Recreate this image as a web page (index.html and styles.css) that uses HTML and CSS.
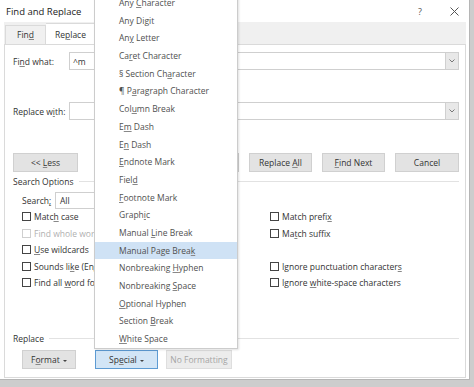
FILE: index.html
```html
<!DOCTYPE html>
<html lang="en">
<head>
  <meta charset="UTF-8" />
  <title>Find and Replace</title>
  <link rel="stylesheet" href="styles.css">
</head>
<body>
  <div class="dialog">
    <div class="titlebar">
      <span class="title">Find and Replace</span>
      <span class="help">?</span>
      <svg class="close" width="9" height="9" viewBox="0 0 9 9"><path d="M0.5 0.5 L8.5 8.5 M8.5 0.5 L0.5 8.5" stroke="#555" stroke-width="1" fill="none"/></svg>
    </div>

    <div class="tabs">
      <div class="tab">Fin<u>d</u></div>
      <div class="tab active">Re<u>p</u>lace</div>
    </div>

    <div class="panel">
      <div class="field-row">
        <label>Fi<u>n</u>d what:</label>
        <div class="combo">
          <span class="combo-text">^m</span>
          <span class="combo-btn"><svg width="6" height="4" viewBox="0 0 6 4"><path d="M0.5 0.5 L3 3 L5.5 0.5" stroke="#777" fill="none"/></svg></span>
        </div>
      </div>

      <div class="field-row replace-row">
        <label>Replace w<u>i</u>th:</label>
        <div class="combo">
          <span class="combo-text"></span>
          <span class="combo-btn"><svg width="6" height="4" viewBox="0 0 6 4"><path d="M0.5 0.5 L3 3 L5.5 0.5" stroke="#777" fill="none"/></svg></span>
        </div>
      </div>

      <div class="btn-row">
        <button class="btn less">&lt;&lt; <u>L</u>ess</button>
        <div class="btn-group">
          <button class="btn"><u>R</u>eplace</button>
          <button class="btn">Replace <u>A</u>ll</button>
          <button class="btn"><u>F</u>ind Next</button>
          <button class="btn cancel">Cancel</button>
        </div>
      </div>

      <div class="group-head"><span>Search Options</span><span class="rule"></span></div>

      <div class="search-row">
        <label>Search<u>;</u></label>
        <div class="select">All</div>
      </div>

      <div class="options">
        <div class="col">
          <div class="check"><span class="box"></span>Matc<u>h</u> case</div>
          <div class="check disabled"><span class="box"></span>Find whole words only</div>
          <div class="check"><span class="box"></span><u>U</u>se wildcards</div>
          <div class="check"><span class="box"></span>Sounds li<u>k</u>e (English)</div>
          <div class="check"><span class="box"></span>Find all <u>w</u>ord forms (English)</div>
        </div>
        <div class="col right">
          <div class="check"><span class="box"></span>Match prefi<u>x</u></div>
          <div class="check"><span class="box"></span>Ma<u>t</u>ch suffix</div>
          <div class="check"></div>
          <div class="check"><span class="box"></span>Ignore punctuation character<u>s</u></div>
          <div class="check"><span class="box"></span>Ignore <u>w</u>hite-space characters</div>
        </div>
      </div>

      <div class="group-head replace-head"><span>Replace</span><span class="rule"></span></div>

      <div class="btn-row bottom">
        <button class="btn format">F<u>o</u>rmat <span class="caret"></span></button>
        <button class="btn special">Sp<u>e</u>cial <span class="caret"></span></button>
        <button class="btn noformat">No Formatting</button>
      </div>
    </div>
  </div>

  <div class="menu">
    <div class="item">Any <u>C</u>haracter</div>
    <div class="item">Any Di<u>g</u>it</div>
    <div class="item">An<u>y</u> Letter</div>
    <div class="item">Ca<u>r</u>et Character</div>
    <div class="item">§ Section Ch<u>a</u>racter</div>
    <div class="item">¶ P<u>a</u>ragraph Character</div>
    <div class="item">Col<u>u</u>mn Break</div>
    <div class="item">E<u>m</u> Dash</div>
    <div class="item">E<u>n</u> Dash</div>
    <div class="item"><u>E</u>ndnote Mark</div>
    <div class="item">Fiel<u>d</u></div>
    <div class="item"><u>F</u>ootnote Mark</div>
    <div class="item">Graph<u>i</u>c</div>
    <div class="item">Manual <u>L</u>ine Break</div>
    <div class="item active">Manual Page Brea<u>k</u></div>
    <div class="item">Nonbreaking <u>H</u>yphen</div>
    <div class="item">Nonbreaking <u>S</u>pace</div>
    <div class="item"><u>O</u>ptional Hyphen</div>
    <div class="item">Section <u>B</u>reak</div>
    <div class="item"><u>W</u>hite Space</div>
  </div>
</body>
</html>
```

FILE: styles.css
```css
* { box-sizing: border-box; }
body { margin: 0; width: 474px; height: 387px; overflow: hidden; position: relative; background: #cdcdcd; font-family: "Open Sans", "Noto Sans", sans-serif; font-size: 8.5px; color: #333; }
u { text-decoration: underline; text-underline-offset: 1px; text-decoration-thickness: 1px; text-decoration-color: #888; }

.dialog { width: 470px; height: 380px; background: #fff; border-right: 1px solid #b5b5b5; border-bottom: 1px solid #b5b5b5; display: flex; flex-direction: column; }

.titlebar { height: 22px; display: flex; align-items: center; padding: 0 10px 0 6px; font-size: 9.5px; color: #222; }
.title { flex: 1; }
.help { margin-right: 28px; font-size: 9px; color: #555; }

.tabs { height: 22px; margin: 0 3px 0 4px; background: #f0f0f0; display: flex; align-items: flex-end; padding-left: 1px; }
.tab { height: 19px; width: 41px; line-height: 18px; text-align: center; border: 1px solid #dadada; border-bottom: none; }
.tab.active { height: 22px; width: 50px; line-height: 21px; background: #fff; border-left: none; margin-bottom: -1px; }

.panel { flex: 1; margin: 0 3px 1px 4px; border: 1px solid #dadada; padding: 7px 6px 0 8px; display: flex; flex-direction: column; }

.field-row { display: flex; align-items: center; height: 18px; }
.field-row label { width: 56px; }
.replace-row { margin-top: 32px; }
.combo { flex: 1; height: 18px; border: 1px solid #cfcfcf; display: flex; align-items: center; }
.combo-text { flex: 1; padding-left: 3px; }
.combo-btn { width: 13px; height: 16px; background: #e8e8e8; border-left: 1px solid #d0d0d0; display: flex; align-items: center; justify-content: center; }

.btn-row { display: flex; margin-top: 33px; height: 19px; }
.btn-group { margin-left: auto; display: flex; gap: 10px; }
.btn { height: 19px; width: 63px; padding: 0; background: #e3e3e3; border: 1px solid #d0d0d0; font: inherit; color: #333; line-height: 17px; text-align: center; white-space: nowrap; }
.btn.less { width: 65px; }
.btn.cancel { width: 64px; }

.group-head { display: flex; align-items: center; height: 12px; margin-top: 3px; }
.group-head .rule { flex: 1; height: 1px; background: #e2e2e2; margin-left: 5px; }

.search-row { display: flex; align-items: center; padding-left: 9px; margin-top: 5px; height: 17px; }
.search-row label { width: 33px; }
.select { width: 150px; height: 17px; border: 1px solid #cfcfcf; padding-left: 4px; line-height: 15px; }

.options { display: flex; padding-left: 9px; }
.col { width: 248px; flex-shrink: 0; }
.col.right { flex: 1; width: auto; }
.check { height: 16.5px; line-height: 16.5px; white-space: nowrap; }
.box { display: inline-block; vertical-align: -1px; width: 9px; height: 9px; border: 1px solid #444; margin-right: 3px; background: #fff; }
.check.disabled { color: #b0b0b0; }
.check.disabled .box { border-color: #cfcfcf; }

.replace-head { margin-top: 41px; }
.btn-row.bottom { margin-top: 5px; padding-left: 9px; }
.btn.format { width: 54px; }
.btn.special { width: 63px; margin-left: 19px; background: #d2e5f6; border-color: #5d9bd3; }
.btn.noformat { width: 66px; margin-left: 8px; background: #ececec; border-color: #dedede; color: #a5a5a5; }
.caret { display: inline-block; vertical-align: 1px; margin-left: 1px; width: 0; height: 0; border-left: 2px solid transparent; border-right: 2px solid transparent; border-top: 2px solid #444; }

.menu { position: absolute; left: 94px; top: -7px; width: 144px; background: #fff; border: 1px solid #cccccc; box-shadow: 1px 1px 2px rgba(0,0,0,0.12); }
.item { height: 17.7px; line-height: 17.7px; padding-left: 24px; color: #505050; white-space: nowrap; }
.item.active { background: #cfe2f5; }
```
